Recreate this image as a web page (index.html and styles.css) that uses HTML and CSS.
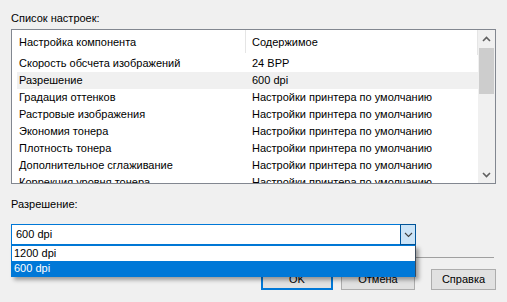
FILE: index.html
```html
<!DOCTYPE html>
<html lang="ru">
<head>
<meta charset="utf-8">
<title>Настройки</title>
<link rel="stylesheet" href="styles.css">
</head>
<body>
<div class="dialog">
  <div class="label first">Список настроек:</div>
  <div class="list">
    <div class="list-main">
      <div class="list-header">
        <div class="hcol c1">Настройка компонента</div>
        <div class="hcol c2">Содержимое</div>
      </div>
      <div class="rows">
        <div class="row"><span class="c1">Скорость обсчета изображений</span><span class="c2">24 BPP</span></div>
        <div class="row sel"><span class="c1">Разрешение</span><span class="c2">600 dpi</span></div>
        <div class="row"><span class="c1">Градация оттенков</span><span class="c2">Настройки принтера по умолчанию</span></div>
        <div class="row"><span class="c1">Растровые изображения</span><span class="c2">Настройки принтера по умолчанию</span></div>
        <div class="row"><span class="c1">Экономия тонера</span><span class="c2">Настройки принтера по умолчанию</span></div>
        <div class="row"><span class="c1">Плотность тонера</span><span class="c2">Настройки принтера по умолчанию</span></div>
        <div class="row"><span class="c1">Дополнительное сглаживание</span><span class="c2">Настройки принтера по умолчанию</span></div>
        <div class="row"><span class="c1">Коррекция уровня тонера</span><span class="c2">Настройки принтера по умолчанию</span></div>
      </div>
    </div>
    <div class="scrollbar">
      <div class="sb-btn">
        <svg width="9" height="6" viewBox="0 0 9 6"><path d="M1 5 L4.5 1.5 L8 5" fill="none" stroke="#606060" stroke-width="1.6"/></svg>
      </div>
      <div class="sb-track"><div class="sb-thumb"></div></div>
      <div class="sb-btn">
        <svg width="9" height="6" viewBox="0 0 9 6"><path d="M1 1 L4.5 4.5 L8 1" fill="none" stroke="#606060" stroke-width="1.6"/></svg>
      </div>
    </div>
  </div>

  <div class="label second">Разрешение:</div>
  <div class="combo-wrap">
    <div class="combo">
      <div class="combo-text">600 dpi</div>
      <div class="combo-btn">
        <svg width="9" height="6" viewBox="0 0 9 6"><path d="M1 1 L4.5 4.5 L8 1" fill="none" stroke="#404040" stroke-width="1.1"/></svg>
      </div>
    </div>
    <div class="dropdown">
      <div class="opt">1200 dpi</div>
      <div class="opt active">600 dpi</div>
    </div>
  </div>

  <div class="separator"></div>

  <div class="buttons">
    <div class="btn ok">OK</div>
    <div class="btn cancel">Отмена</div>
    <div class="btn help">Справка</div>
  </div>
</div>
</body>
</html>
```

FILE: styles.css
```css
html, body {
  margin: 0;
  padding: 0;
  background: #f0f0f0;
}
body {
  font-family: "Liberation Sans", Arial, sans-serif;
  font-size: 11px;
  color: #000;
  width: 507px;
  height: 302px;
  overflow: hidden;
}
.dialog {
  display: flex;
  flex-direction: column;
  padding: 0 11px;
}
.label {
  height: 16px;
  line-height: 16px;
}
.label.first { margin-top: 10px; }
.label.second { margin-top: 12px; }

.list {
  margin-top: 3px;
  height: 155px;
  box-sizing: border-box;
  border: 1px solid #828790;
  background: #fff;
  display: flex;
}
.list-main {
  flex: 1;
  overflow: hidden;
  display: flex;
  flex-direction: column;
}
.list-header {
  height: 25px;
  flex: none;
  display: flex;
  align-items: stretch;
}
.hcol {
  box-sizing: border-box;
  line-height: 25px;
}
.hcol.c1 {
  width: 234px;
  padding-left: 7px;
  border-right: 1px solid #e5e5e5;
  margin-bottom: 2px;
}
.hcol.c2 {
  width: 232px;
  padding-left: 6px;
  border-right: 1px solid #e5e5e5;
}
.rows {
  display: flex;
  flex-direction: column;
}
.row {
  height: 17px;
  line-height: 17px;
  margin-left: 5px;
  display: flex;
  white-space: nowrap;
  flex: none;
}
.row.sel { background: #f0f0f0; }
.row .c1 {
  width: 235px;
  box-sizing: border-box;
  padding-left: 2px;
  flex: none;
}
.row .c2 { flex: 1; }

.scrollbar {
  width: 17px;
  flex: none;
  background: #f0f0f0;
  display: flex;
  flex-direction: column;
}
.sb-btn {
  height: 17px;
  display: flex;
  align-items: center;
  justify-content: center;
  flex: none;
}
.sb-track {
  flex: 1;
  padding: 1px 1px 0;
}
.sb-thumb {
  height: 46px;
  background: #cdcdcd;
}

.combo-wrap {
  margin-top: 12px;
  position: relative;
  width: 405px;
}
.combo {
  height: 21px;
  box-sizing: border-box;
  border: 1px solid #0078d7;
  background: #fff;
  display: flex;
}
.combo-text {
  flex: 1;
  padding-left: 4px;
  line-height: 19px;
}
.combo-btn {
  width: 16px;
  margin: -1px -1px -1px 0;
  box-sizing: border-box;
  border: 1px solid #005499;
  background: #cce4f7;
  display: flex;
  align-items: center;
  justify-content: center;
}
.dropdown {
  position: absolute;
  top: 21px;
  left: 0;
  width: 405px;
  box-sizing: border-box;
  border: 1px solid #0078d7;
  border-right-color: #3c4a5a;
  background: #fff;
  box-shadow: 3px 3px 4px rgba(0, 0, 0, 0.35);
  z-index: 5;
}
.opt {
  height: 15px;
  line-height: 15px;
  padding-left: 2px;
}
.opt.active {
  background: #0078d7;
  color: #fff;
}

.separator {
  margin-top: 12px;
  height: 1px;
  background: #a0a0a0;
  width: 483px;
}

.buttons {
  margin-top: 11px;
  display: flex;
  justify-content: flex-end;
}
.btn {
  height: 21px;
  box-sizing: border-box;
  border: 1px solid #adadad;
  background: #e1e1e1;
  text-align: center;
  line-height: 19px;
}
.btn.ok {
  width: 72px;
  border: 2px solid #0078d7;
  line-height: 17px;
}
.btn.cancel {
  width: 74px;
  margin-left: 8px;
}
.btn.help {
  width: 65px;
  margin-left: 16px;
}
```
